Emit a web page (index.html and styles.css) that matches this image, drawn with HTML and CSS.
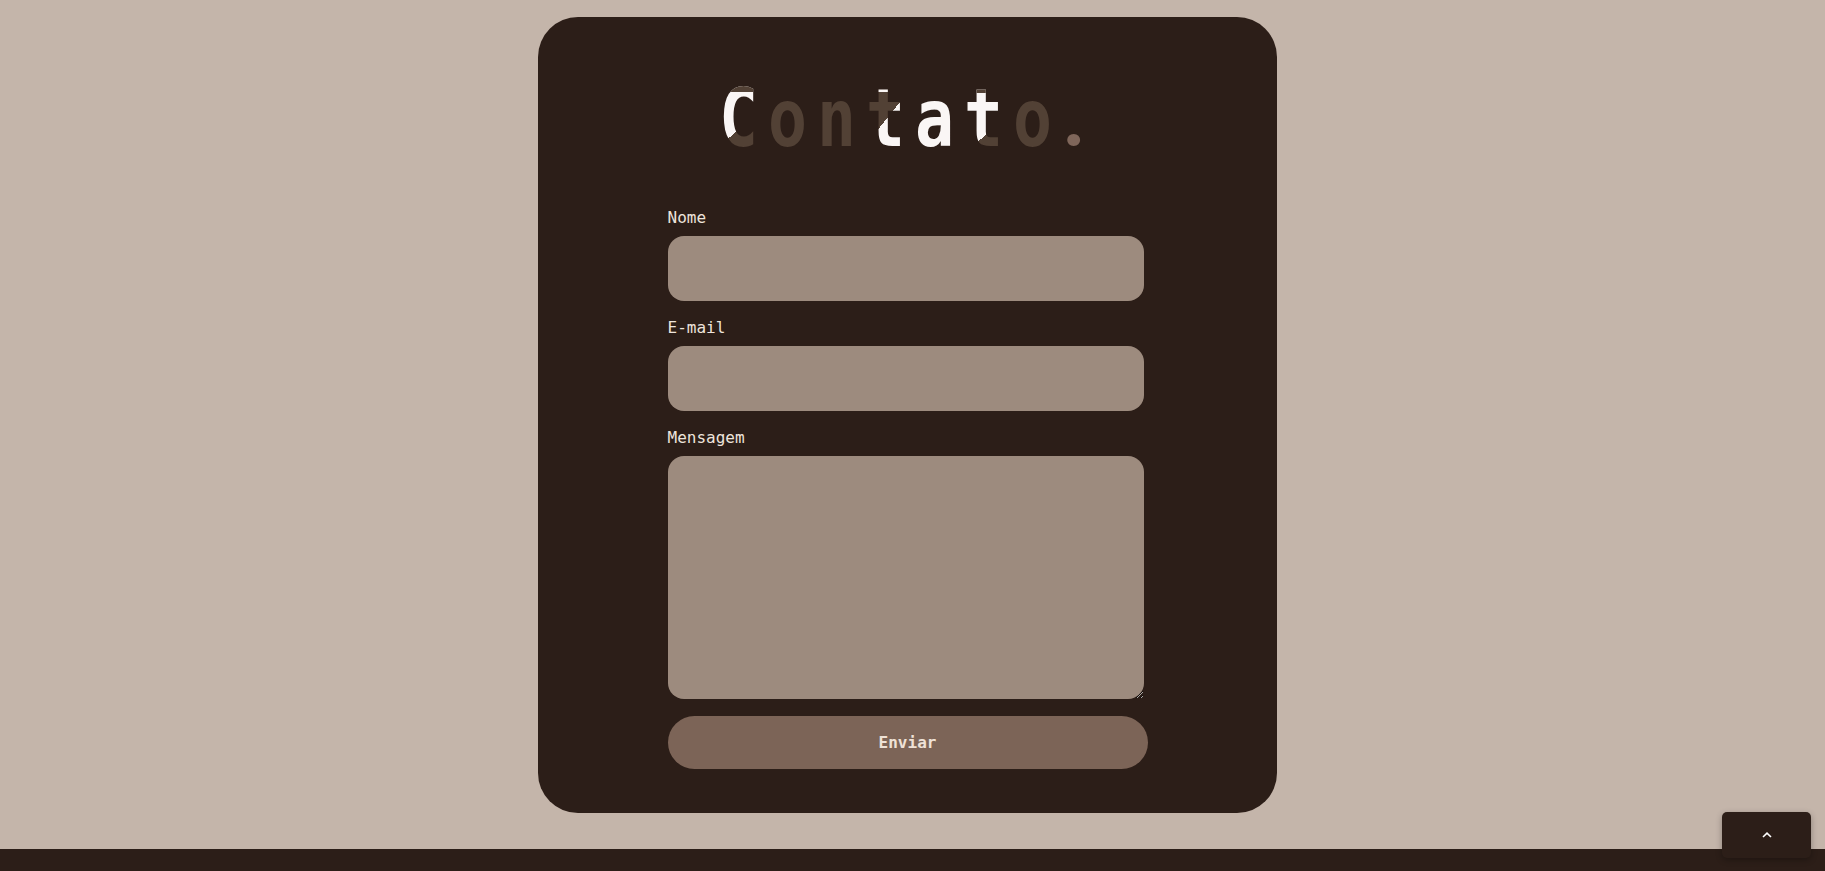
FILE: index.html
```html
<!DOCTYPE html>
<html lang="pt-BR">
<head>
    <meta charset="UTF-8" />
    <meta name="viewport" content="width=device-width, initial-scale=1.0" />
    <title>Contato</title>
    <link rel="stylesheet" href="styles.css">
</head>
<body>
    <main class="page">
        <section class="contact-card" id="contato">
            <h1 class="title"><span class="lt lt-c">C</span><span class="dim">o</span><span class="dim">n</span><span class="lt lt-t1">t</span><span class="lit">a</span><span class="lt lt-t2">t</span><span class="dim">o</span><span class="dot">.</span></h1>

            <form class="contact-form">
                <label for="nome">Nome</label>
                <input id="nome" type="text">

                <label for="email">E-mail</label>
                <input id="email" type="email">

                <label for="mensagem">Mensagem</label>
                <textarea id="mensagem"></textarea>

                <button type="submit">Enviar</button>
            </form>
        </section>
    </main>

    <footer class="footer"></footer>

    <a class="to-top" href="#contato" aria-label="Voltar ao topo">
        <svg width="10" height="6" viewBox="0 0 10 6">
            <polyline points="1,5 5,1.2 9,5" fill="none" stroke="#fff" stroke-width="1.6" />
        </svg>
    </a>
</body>
</html>
```

FILE: styles.css
```css
body {
    margin: 0;
    background-color: #c4b5aa;
    font-family: "DejaVu Sans Mono", "Liberation Mono", monospace;
    overflow: hidden;
}

.page {
    display: flex;
    justify-content: center;
    padding: 17px 10px 36px 0;
}

.contact-card {
    width: 739px;
    height: 796px;
    box-sizing: border-box;
    padding-top: 54px;
    background-color: #2c1e18;
    border-radius: 40px;
    display: flex;
    flex-direction: column;
    align-items: center;
}

/* titulo com as letras meio "acesas" */
.title {
    margin: 0 0 0 4px;
    font-size: 81px;
    font-weight: bold;
    line-height: normal;
    color: #524135;
    white-space: nowrap;
}

.title span {
    display: inline-block;
    width: 49px;
    text-align: center;
    transform: scaleX(0.8);
}

.title .lit {
    color: #faf6f5;
}

.title .dot {
    margin-left: -7px;
    margin-right: 7px;
    font-family: Roboto, "DejaVu Sans Mono", sans-serif;
    line-height: 60px;
    color: #7f665a;
    transform: none;
}

.title .lt {
    color: transparent;
    -webkit-background-clip: text;
    background-clip: text;
}

.title .lt-c {
    background-image:
        linear-gradient(#524135 21px, transparent 21px),
        linear-gradient(145deg, #faf6f5 62px, #524135 62px);
}

.title .lt-t1 {
    background-image:
        linear-gradient(#faf6f5 21px, transparent 21px),
        linear-gradient(135deg, #524135 52px, #faf6f5 52px);
}

.title .lt-t2 {
    background-image:
        linear-gradient(#524135 22px, transparent 22px),
        linear-gradient(145deg, #faf6f5 68px, #524135 68px);
}

.contact-form {
    width: 480px;
    margin-top: 43px;
    display: flex;
    flex-direction: column;
    align-items: flex-start;
}

.contact-form label {
    font-size: 16px;
    line-height: 19px;
    color: #eee4dc;
    margin-bottom: 9px;
}

.contact-form input,
.contact-form textarea {
    width: 476px;
    box-sizing: border-box;
    border: none;
    border-radius: 16px;
    background-color: #9d8b7e;
    margin: 0 0 17px 0;
    padding: 10px 16px;
    font-family: inherit;
    font-size: 16px;
    color: #2c1e18;
}

.contact-form input {
    height: 65px;
}

.contact-form textarea {
    height: 243px;
}

.contact-form button {
    width: 480px;
    height: 53px;
    border: none;
    border-radius: 27px;
    background-color: #7c6457;
    color: #eee1d6;
    font-family: inherit;
    font-size: 16px;
    font-weight: bold;
    cursor: pointer;
}

.contact-form button:hover {
    background-color: #8a7165;
}

.footer {
    height: 22px;
    background-color: #2c1e18;
}

.to-top {
    position: fixed;
    right: 14px;
    bottom: 13px;
    width: 89px;
    height: 46px;
    border-radius: 5px;
    background-color: #2c1e18;
    box-shadow: 0 2px 6px rgba(0, 0, 0, 0.3);
    display: flex;
    align-items: center;
    justify-content: center;
}
```
